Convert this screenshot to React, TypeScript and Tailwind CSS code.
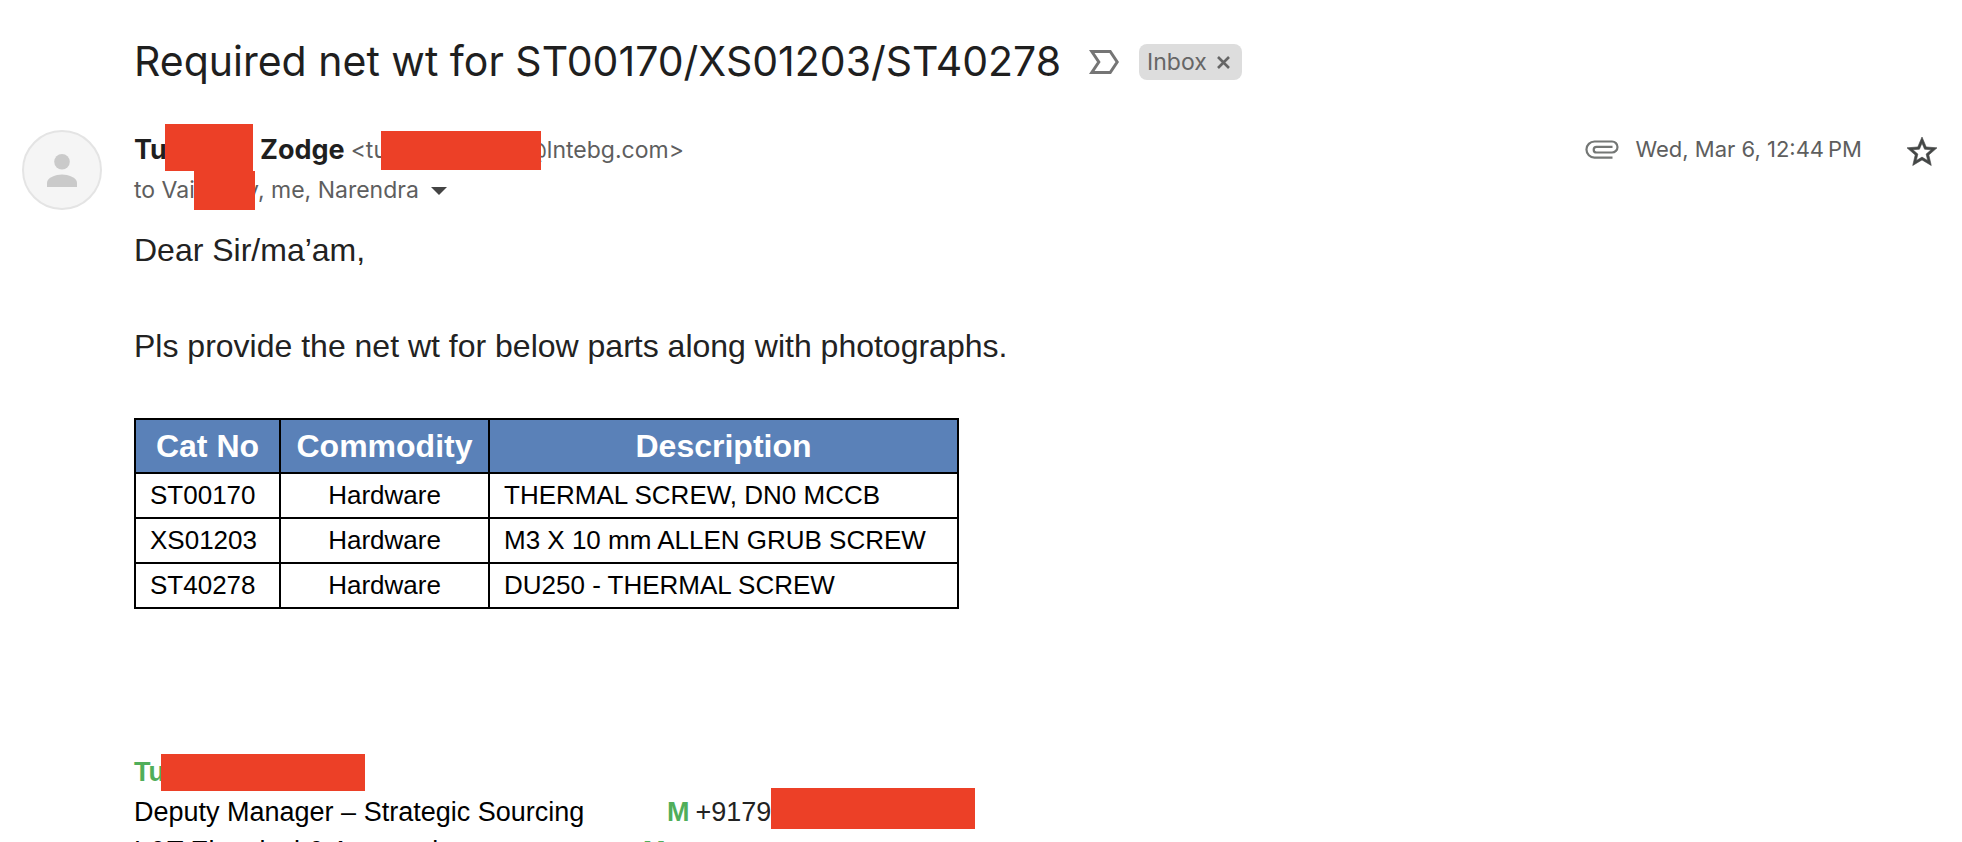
const parts = [
  { cat: "ST00170", commodity: "Hardware", description: "THERMAL SCREW, DN0 MCCB" },
  { cat: "XS01203", commodity: "Hardware", description: "M3 X 10 mm ALLEN GRUB SCREW" },
  { cat: "ST40278", commodity: "Hardware", description: "DU250 - THERMAL SCREW" },
];

function ImportantIcon() {
  return (
    <svg width="30" height="24" viewBox="0 0 30 24" fill="none" stroke="#757575" strokeWidth="3" aria-hidden="true">
      <path d="M2.8 1.5H21.2L28.2 12L21.2 22.5H2.8L9.8 12Z" />
    </svg>
  );
}

function PersonIcon() {
  return (
    <svg width="30" height="33" viewBox="0 0 30 33" fill="#cacaca" aria-hidden="true">
      <circle cx="15" cy="7.8" r="7.8" />
      <path d="M0 33V29C0 23.2 9 20.4 15 20.4S30 23.2 30 29V33Z" />
    </svg>
  );
}

function AttachmentIcon() {
  return (
    <svg width="34" height="19" viewBox="0 0 34 19" fill="none" stroke="#747775" strokeWidth="2.2" role="img" aria-label="Has attachment">
      <path d="M27.5 17.6H9.5A8 8 0 0 1 9.5 1.5H27A5.5 5.5 0 0 1 27 12.5H11.5A2.8 2.8 0 0 1 11.5 6.9H27.5" />
    </svg>
  );
}

function StarIcon() {
  return (
    <svg width="36" height="36" viewBox="0 0 24 24" fill="#444746" stroke="#444746" strokeWidth="0.4" aria-hidden="true">
      <path d="M22 9.24l-7.19-.62L12 2 9.19 8.63 2 9.24l5.46 4.73L5.82 21 12 17.27 18.18 21l-1.63-7.03L22 9.24zM12 15.4l-3.76 2.27 1-4.28-3.32-2.88 4.38-.38L12 6.1l1.71 4.04 4.38.38-3.32 2.88 1 4.28L12 15.4z" />
    </svg>
  );
}

export default function App() {
  return (
    <main className="h-screen overflow-hidden bg-white pt-8 font-['Inter',sans-serif] text-[#1f1f1f]">
      <header className="flex h-[60px] items-center pl-[134px] whitespace-nowrap">
        <h1 className="text-[41px]">Required net wt for ST00170/XS01203/ST40278</h1>
        <button type="button" aria-label="Mark as important" className="ml-7">
          <ImportantIcon />
        </button>
        <div className="ml-5 flex h-9 items-center gap-1.5 rounded-lg bg-[#ddd] px-2 text-[23px] text-[#666]">
          <span>Inbox</span>
          <button type="button" aria-label="Remove Inbox label" className="p-1">
            <svg width="13" height="13" viewBox="0 0 13 13" stroke="#666" strokeWidth="2.6" aria-hidden="true">
              <path d="M1 1L12 12M12 1L1 12" />
            </svg>
          </button>
        </div>
      </header>

      <article>
        <div className="mt-8 flex items-start pr-[22px] pl-[22px] whitespace-nowrap">
          <div className="mt-1.5 flex size-20 shrink-0 items-center justify-center rounded-full border-2 border-[#e4e4e4] bg-[#f5f5f5]">
            <PersonIcon />
          </div>

          <div className="ml-8 grow">
            <div className="flex h-[47px] items-start text-[23px] leading-[52px] text-[#5e5e5e]">
              <b className="w-[31px] text-[27px] text-[#1f1f1f]">Tu</b>
              <span className="relative z-10 h-[47px] w-[88px] bg-[#ec4027]" />
              <b className="ml-[7px] text-[27px] text-[#1f1f1f]">Zodge</b>
              <span className="ml-[6px] w-[30px]">&lt;tu</span>
              <span className="relative z-10 mt-[7px] h-[39px] w-[160px] bg-[#ec4027]" />
              <span className="-ml-4">@lntebg.com&gt;</span>
            </div>
            <div className="flex h-[39px] items-center text-[23px] text-[#5e5e5e]">
              <span className="w-[60px]">to Vai</span>
              <span className="relative z-10 h-[39px] w-[61px] bg-[#ec4027]" />
              <span className="-ml-[9px]">y, me, Narendra</span>
              <button type="button" aria-label="Show details" className="ml-3">
                <svg width="16" height="8" viewBox="0 0 16 8" fill="#444" aria-hidden="true">
                  <path d="M0 0H16L8 8Z" />
                </svg>
              </button>
            </div>
          </div>

          <div className="flex items-start text-[22px] text-[#5e5e5e]">
            <div className="flex h-[50px] items-center gap-4">
              <AttachmentIcon />
              <time>Wed, Mar 6, 12:44{"\u2009"}PM</time>
            </div>
            <button type="button" aria-label="Star" className="mt-[10px] ml-[42px]">
              <StarIcon />
            </button>
          </div>
        </div>

        <div className="mt-4 pl-[134px] font-['Liberation_Sans',Arial,sans-serif] whitespace-nowrap">
          <div className="flex flex-col gap-12 text-[32px] leading-[48px] text-[#222]">
            <p>Dear Sir/ma’am,</p>
            <p>Pls provide the net wt for below parts along with photographs.</p>
          </div>

          <table className="mt-12 table-fixed border-collapse border-2 border-black text-[26px] text-black">
            <colgroup>
              <col className="w-[145px]" />
              <col className="w-[209px]" />
              <col className="w-[469px]" />
            </colgroup>
            <thead className="bg-[#5a81b8] text-[32px] text-white">
              <tr className="h-[54px]">
                <th className="border-2 border-black">Cat No</th>
                <th className="border-2 border-black">Commodity</th>
                <th className="border-2 border-black">Description</th>
              </tr>
            </thead>
            <tbody>
              {parts.map((part) => (
                <tr key={part.cat} className="h-[45px]">
                  <td className="border-2 border-black px-[14px]">{part.cat}</td>
                  <td className="border-2 border-black px-[14px] text-center">{part.commodity}</td>
                  <td className="border-2 border-black px-[14px]">{part.description}</td>
                </tr>
              ))}
            </tbody>
          </table>

          <footer className="mt-[143px] text-[27px] leading-10 text-black">
            <div className="flex h-10 items-center">
              <b className="w-[27px] text-[#50ae5a]">Tu</b>
              <span className="relative z-10 h-[37px] w-[204px] bg-[#ec4027]" />
            </div>
            <div className="flex h-10 items-center">
              <span className="w-[533px]">Deputy Manager – Strategic Sourcing</span>
              <b className="text-[#50ae5a]">M</b>
              <span className="ml-[6px] w-[75px] text-[#222]">+9179</span>
              <span className="relative z-10 -mt-2 h-[41px] w-[204px] bg-[#ec4027]" />
            </div>
            <div className="flex h-[38px] items-center">
              <span className="w-[509px]">L&amp;T Electrical &amp; Automation</span>
              <b className="text-[#50ae5a]">M</b>
            </div>
          </footer>
        </div>
      </article>
    </main>
  );
}
